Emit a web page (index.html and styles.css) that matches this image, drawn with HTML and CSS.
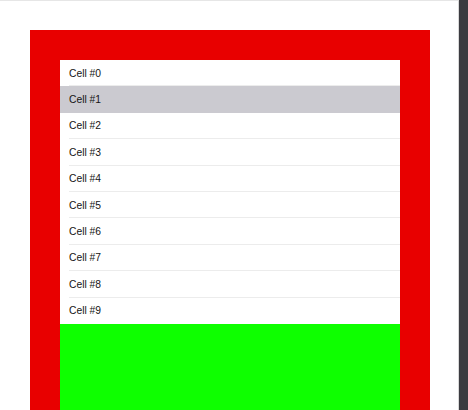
FILE: index.html
```html
<!DOCTYPE html>
<html>
<head>
<meta charset="utf-8">
<link rel="stylesheet" href="styles.css">
</head>
<body>
<div class="screen">
  <div class="page">
    <div class="frame">
      <div class="content">
        <div class="list">
          <div class="cell"><span>Cell #0</span></div>
          <div class="cell selected"><span>Cell #1</span></div>
          <div class="cell"><span>Cell #2</span></div>
          <div class="cell"><span>Cell #3</span></div>
          <div class="cell"><span>Cell #4</span></div>
          <div class="cell"><span>Cell #5</span></div>
          <div class="cell"><span>Cell #6</span></div>
          <div class="cell"><span>Cell #7</span></div>
          <div class="cell"><span>Cell #8</span></div>
          <div class="cell last"><span>Cell #9</span></div>
        </div>
        <div class="footer"></div>
      </div>
    </div>
  </div>
  <div class="scrollbar"></div>
</div>
</body>
</html>
```
FILE: styles.css
```css
html, body {
  margin: 0;
  padding: 0;
  background: #ffffff;
  overflow: hidden;
}
.screen {
  display: flex;
  width: 468px;
  height: 410px;
  overflow: hidden;
}
.page {
  width: 459px;
  height: 410px;
  box-sizing: border-box;
  border-top: 1px solid #e6e6e6;
  border-right: 1px solid #d8d8d8;
  padding: 29px 0 0 30px;
  background: #ffffff;
}
.scrollbar {
  width: 9px;
  height: 410px;
  background: #3b3b40;
}
.frame {
  width: 400px;
  height: 400px;
  box-sizing: border-box;
  background: #e80000;
  padding: 30px 30px 0 30px;
}
.content {
  display: flex;
  flex-direction: column;
  height: 100%;
  background: #ffffff;
}
.list {
  display: flex;
  flex-direction: column;
}
.cell {
  height: 26.4px;
  display: flex;
  align-items: center;
  padding-left: 9px;
  position: relative;
  font-family: "Liberation Sans", Arial, sans-serif;
  font-size: 10.3px;
  color: #141414;
  background: #ffffff;
}
.cell::after {
  content: "";
  position: absolute;
  left: 9px;
  right: 0;
  bottom: 0;
  height: 1px;
  background: #ececec;
}
.cell.selected {
  background: #cbcad0;
}
.cell.selected::after,
.cell.last::after {
  display: none;
}
.footer {
  flex: 1;
  background: #0eff00;
}
```
